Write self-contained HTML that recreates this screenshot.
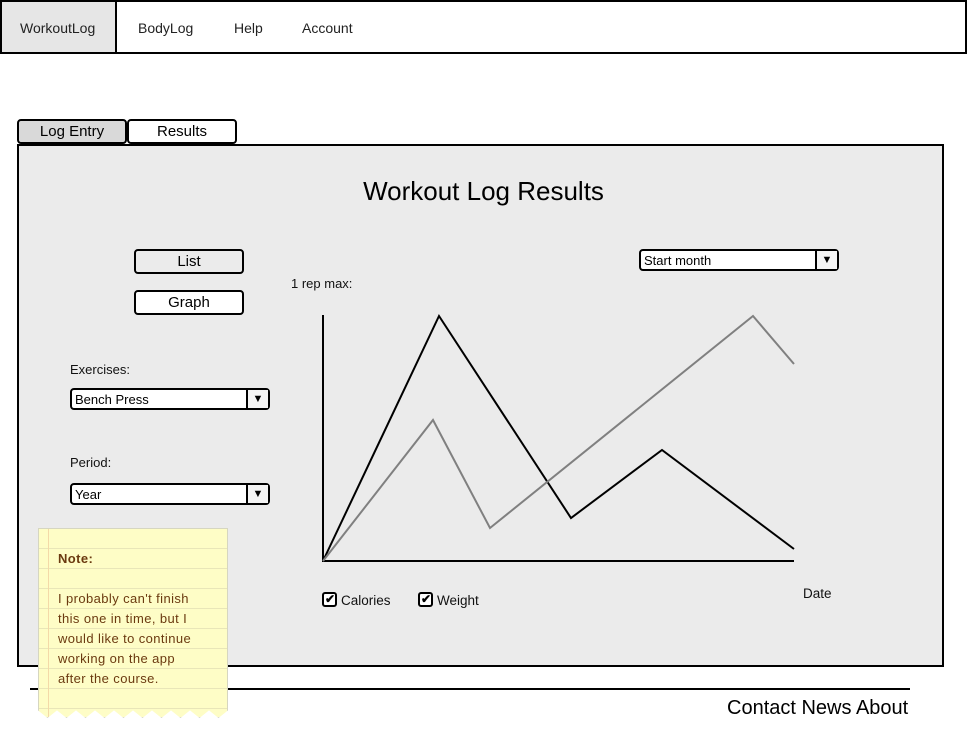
<!DOCTYPE html>
<html><head><meta charset="utf-8"><style>
*{margin:0;padding:0;box-sizing:border-box}
body{width:967px;height:729px;background:#fff;font-family:"Liberation Sans",sans-serif;position:relative;overflow:hidden;color:#000}
.a{position:absolute}
.nav{left:0;top:0;width:967px;height:54px;border:2px solid #000}
.nav span{position:absolute;top:18px;font-size:14px;color:#222}
.btn{position:absolute;border:2px solid #000;border-radius:4px;text-align:center;font-size:15px;line-height:21px}
.dd{position:absolute;border:2px solid #000;border-radius:4px;background:#fff;font-size:13px;line-height:19px;padding-left:3px;height:22px}
.dd b{position:absolute;right:0;top:0;width:22px;height:18px;border-left:2px solid #000;font-size:11px;text-align:center;font-weight:normal;line-height:18px;background:#f4f4f4}
.lbl{position:absolute;font-size:13px;color:#111}
.cb{position:absolute;width:15px;height:15px;border:2px solid #000;border-radius:3px;background:#fff}
</style></head><body>
<div class="a nav">
<div class="a" style="left:0;top:0;width:115px;height:50px;background:#e6e6e6;border-right:2px solid #000"></div>
<span style="left:18px">WorkoutLog</span>
<span style="left:136px">BodyLog</span>
<span style="left:232px">Help</span>
<span style="left:300px">Account</span>
</div>
<div class="btn" style="left:17px;top:119px;width:110px;height:25px;background:#d9d9d9">Log Entry</div>
<div class="btn" style="left:127px;top:119px;width:110px;height:25px;background:#fff">Results</div>
<div class="a" style="left:17px;top:144px;width:927px;height:523px;border:2px solid #000;background:#ebebeb"></div>
<div class="a" style="left:0;top:176px;width:967px;text-align:center;font-size:26px">Workout Log Results</div>
<div class="btn" style="left:134px;top:249px;width:110px;height:25px;background:#ebebeb">List</div>
<div class="btn" style="left:134px;top:290px;width:110px;height:25px;background:#fff">Graph</div>
<div class="lbl" style="left:70px;top:362px">Exercises:</div>
<div class="dd" style="left:70px;top:388px;width:200px">Bench Press<b>▼</b></div>
<div class="lbl" style="left:70px;top:455px">Period:</div>
<div class="dd" style="left:70px;top:483px;width:200px">Year<b>▼</b></div>
<div class="dd" style="left:639px;top:249px;width:200px">Start month<b>▼</b></div>
<div class="lbl" style="left:291px;top:276px">1 rep max:</div>
<svg class="a" style="left:0;top:0" width="967" height="729">
<polyline points="323,315 323,561 794,561" fill="none" stroke="#000" stroke-width="2"/>
<polyline points="323,561 439,316 571,518 662,450 794,549" fill="none" stroke="#000" stroke-width="2"/>
<polyline points="323,561 433,420 490,528 753,316 794,364" fill="none" stroke="#808080" stroke-width="2"/>
<line x1="30" y1="689" x2="910" y2="689" stroke="#000" stroke-width="2"/>
</svg>
<div class="lbl" style="left:803px;top:586px;font-size:13.5px">Date</div>
<div class="cb" style="left:322px;top:592px"></div><div class="a" style="left:325px;top:592px;font-size:12px;font-weight:bold">✔</div>
<div class="lbl" style="left:341px;top:593px;font-size:13.5px">Calories</div>
<div class="cb" style="left:418px;top:592px"></div><div class="a" style="left:421px;top:592px;font-size:12px;font-weight:bold">✔</div>
<div class="lbl" style="left:437px;top:593px;font-size:13.5px">Weight</div>
<div class="a" style="left:727px;top:697px;font-size:20px">Contact News About</div>
<div class="a" style="left:38px;top:528px;width:190px;height:190px;background:repeating-linear-gradient(#fefdc6 0,#fefdc6 19px,#e9e6b8 19px,#e9e6b8 20px);border:1px solid #d6d6c0;clip-path:polygon(0 0,100% 0,100% 96%,95% 100%,90% 96%,85% 100%,80% 96%,75% 100%,70% 96%,65% 100%,60% 96%,55% 100%,50% 96%,45% 100%,40% 96%,35% 100%,30% 96%,25% 100%,20% 96%,15% 100%,10% 96%,5% 100%,0 96%)">
<div class="a" style="left:9px;top:0;width:1px;height:100%;background:#f3d9a8"></div>
<div class="a" style="left:19px;top:20px;font-size:13px;line-height:20px;color:#6b3a10;letter-spacing:0.4px;white-space:nowrap"><b>Note:</b><br><br>I probably can't finish<br>this one in time, but I<br>would like to continue<br>working on the app<br>after the course.</div>
</div>
</body></html>
